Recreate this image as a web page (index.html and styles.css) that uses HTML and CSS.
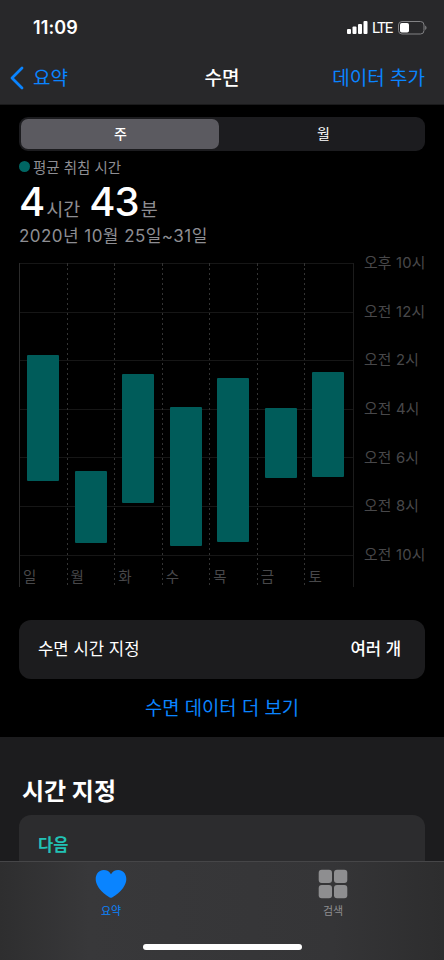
FILE: index.html
```
<!DOCTYPE html>
<html lang="ko">
  <head>
    <meta charset="UTF-8" />
    <meta name="viewport" content="width=device-width, initial-scale=1.0" />
    <title>수면</title>
    <link rel="stylesheet" href="styles.css">
  </head>

  <body>
    <header class="top">
      <div class="status-bar">
        <span class="clock">11:09</span>
        <div class="status-icons">
          <svg width="21" height="13" viewBox="0 0 21 13" fill="#fff">
            <rect x="0" y="8" width="4" height="5" rx="1" />
            <rect x="5.5" y="5.5" width="4" height="7.5" rx="1" />
            <rect x="11" y="3" width="4" height="10" rx="1" />
            <rect x="16.5" y="0" width="4" height="13" rx="1" />
          </svg>
          <span class="network">LTE</span>
          <svg width="29" height="14" viewBox="0 0 29 14">
            <rect x="0.5" y="0.5" width="25.5" height="12.5" rx="3.5" fill="none" stroke="#828284" />
            <rect x="2" y="2" width="9" height="9.5" rx="1.8" fill="#fff" />
            <path d="M27.2 4.5 C29 5.4 29 8.1 27.2 9 Z" fill="#828284" />
          </svg>
        </div>
      </div>
      <nav class="nav-bar">
        <a class="back">
          <svg width="14" height="24" viewBox="0 0 14 24">
            <path d="M12 2 L2 12 L12 22" fill="none" stroke="#0a84ff" stroke-width="2.8" stroke-linecap="round" stroke-linejoin="round" />
          </svg>
          <span>요약</span>
        </a>
        <h1>수면</h1>
        <a class="add">데이터 추가</a>
      </nav>
    </header>

    <main>
      <div class="segment">
        <button class="active">주</button>
        <button>월</button>
      </div>

      <div class="legend"><i class="dot"></i>평균 취침 시간</div>
      <div class="average">
        <b>4</b><span>시간</span><b class="minutes">43</b><span>분</span>
      </div>
      <div class="range">2020년 10월 25일~31일</div>

      <div class="chart">
        <div class="plot">
          <div class="day"><div class="bar" style="margin-top: 91.5px; height: 126.5px"></div><span>일</span></div>
          <div class="day"><div class="bar" style="margin-top: 208px; height: 72px"></div><span>월</span></div>
          <div class="day"><div class="bar" style="margin-top: 111px; height: 129px"></div><span>화</span></div>
          <div class="day"><div class="bar" style="margin-top: 144px; height: 138.5px"></div><span>수</span></div>
          <div class="day"><div class="bar" style="margin-top: 115px; height: 163.5px"></div><span>목</span></div>
          <div class="day"><div class="bar" style="margin-top: 145.4px; height: 69.5px"></div><span>금</span></div>
          <div class="day"><div class="bar" style="margin-top: 109px; height: 105px"></div><span>토</span></div>
        </div>
        <div class="hours">
          <span>오후 10시</span>
          <span>오전 12시</span>
          <span>오전 2시</span>
          <span>오전 4시</span>
          <span>오전 6시</span>
          <span>오전 8시</span>
          <span>오전 10시</span>
        </div>
      </div>

      <div class="row-card">
        <span>수면 시간 지정</span>
        <strong>여러 개</strong>
      </div>
      <a class="more">수면 데이터 더 보기</a>
    </main>

    <section class="schedule">
      <h2>시간 지정</h2>
      <div class="next-card">다음</div>
    </section>

    <footer class="tab-bar">
      <div class="tabs">
        <a class="tab selected">
          <svg width="32" height="30" viewBox="0 0 32 30">
            <path d="M16 28.8 C14.4 28.8 0.7 20.4 0.7 10 C0.7 4.8 4.2 1 8.6 1 C12 1 14.6 2.6 16 5.2 C17.4 2.6 20 1 23.4 1 C27.8 1 31.3 4.8 31.3 10 C31.3 20.4 17.6 28.8 16 28.8 Z" fill="#0a84ff" />
          </svg>
          <span>요약</span>
        </a>
        <a class="tab">
          <svg width="30" height="30" viewBox="0 0 30 30" fill="#8e8e90">
            <rect x="0.7" y="0.8" width="13.3" height="13.3" rx="3" />
            <rect x="16" y="0.8" width="13.3" height="13.3" rx="3" />
            <rect x="0.7" y="16" width="13.3" height="13.3" rx="3" />
            <rect x="16" y="16" width="13.3" height="13.3" rx="3" />
          </svg>
          <span>검색</span>
        </a>
      </div>
      <div class="home-indicator"></div>
    </footer>
  </body>
</html>
```
FILE: styles.css
```
* {
  margin: 0;
  padding: 0;
  box-sizing: border-box;
}

body {
  width: 444px;
  height: 960px;
  display: flex;
  flex-direction: column;
  overflow: hidden;
  background-color: #000;
  color: #fff;
  font-family: "Inter", "Noto Sans CJK KR", sans-serif;
}

.top {
  height: 105px;
  background-color: #28282a;
  border-bottom: 1px solid #1a1a1b;
}

.status-bar {
  height: 55px;
  padding: 0 17px 0 33px;
  display: flex;
  justify-content: space-between;
  align-items: center;
}

.clock {
  font-size: 18px;
  font-weight: 600;
  letter-spacing: 0.1px;
}

.status-icons {
  display: flex;
  align-items: center;
  gap: 4px;
}

.network {
  font-family: "Roboto", sans-serif;
  font-size: 15px;
  letter-spacing: -1.2px;
  margin-right: 2px;
  padding-top: 1px;
}

.nav-bar {
  height: 46px;
  padding: 0 19px 0 10px;
  display: grid;
  grid-template-columns: 1fr auto 1fr;
  align-items: center;
  font-size: 19px;
  line-height: 28px;
}

.nav-bar h1 {
  font-size: 19px;
  font-weight: 500;
  margin-left: 9px;
  padding-top: 2px;
}

.back {
  display: flex;
  align-items: center;
  gap: 9px;
  color: #0a84ff;
}

.back span {
  padding-top: 2px;
}

.add {
  justify-self: end;
  padding-top: 2px;
  color: #0a84ff;
}

main {
  height: 632px;
  padding: 12px 19px 0;
  flex-shrink: 0;
}

.segment {
  height: 34px;
  padding: 2px;
  display: flex;
  border-radius: 9px;
  background-color: #1c1c1f;
}

.segment button {
  flex: 1;
  padding-left: 5px;
  border: none;
  border-radius: 7px;
  background: none;
  color: #fff;
  font-family: inherit;
  font-size: 14px;
  line-height: 30px;
}

.segment .active {
  flex: 0 0 198px;
  padding-left: 1px;
  background-color: #5b5a60;
  font-weight: 500;
}

.legend {
  height: 31px;
  display: flex;
  align-items: center;
  gap: 3px;
  color: #8e8e93;
  font-size: 14.5px;
}

.dot {
  width: 11px;
  height: 11px;
  border-radius: 50%;
  background-color: #006663;
}

.average {
  height: 40px;
  display: flex;
  align-items: baseline;
  line-height: 40px;
}

.average b {
  font-size: 40px;
  font-weight: 500;
  letter-spacing: -1px;
}

.average span {
  color: #8e8e93;
  font-size: 18.5px;
  margin-left: 2px;
}

.average .minutes {
  margin-left: 9px;
}

.range {
  height: 26px;
  color: #8e8e93;
  font-size: 17px;
  line-height: 28px;
  letter-spacing: 0.45px;
}

.chart {
  height: 324px;
  margin-top: 15px;
  display: flex;
}

.plot {
  width: 335px;
  height: 324px;
  flex-shrink: 0;
  display: grid;
  grid-template-columns: repeat(7, 1fr);
  border-left: 1px solid #2b2b2b;
  border-right: 1px solid #1c1c1c;
  /* one line every two hours */
  background: repeating-linear-gradient(#161616 0 1px, transparent 1px 48.6px) top / 100% 293px no-repeat;
}

.day {
  height: 324px;
  padding-left: 7px;
  display: flex;
  flex-direction: column;
  justify-content: space-between;
  background: repeating-linear-gradient(#333 0 2.5px, transparent 2.5px 5px) right / 1px 100% no-repeat;
}

.day:last-child {
  background: none;
}

.day span {
  height: 20px;
  margin: 0 0 0 -4px;
  color: #48484a;
  font-size: 14.5px;
  line-height: 20px;
}

.bar {
  width: 32px;
  border-radius: 1px;
  background-color: #005c5a;
}

.hours {
  height: 312px;
  margin: -10px 0 0 10px;
  display: flex;
  flex-direction: column;
  justify-content: space-between;
  color: #48484a;
  font-size: 14.8px;
  line-height: 20px;
  letter-spacing: 0.2px;
  white-space: nowrap;
}

.row-card {
  height: 59px;
  margin-top: 32.5px;
  padding: 0 24px 2px 19px;
  display: flex;
  justify-content: space-between;
  align-items: center;
  border-radius: 12px;
  background-color: #1c1c1e;
  font-size: 16.7px;
}

.row-card strong {
  font-weight: 500;
}

.more {
  height: 58px;
  display: block;
  color: #0a84ff;
  font-size: 18.8px;
  line-height: 60px;
  text-align: center;
}

.schedule {
  height: 124px;
  padding: 36px 19px 0;
  flex-shrink: 0;
  background-color: #1c1c1e;
}

.schedule h2 {
  height: 42px;
  padding-left: 3px;
  font-size: 24px;
  font-weight: 700;
  line-height: 38px;
}

.next-card {
  height: 46px;
  padding: 16px 19px 0;
  border-radius: 12px 12px 0 0;
  background-color: #2c2c2e;
  color: #22c2b5;
  font-size: 16.5px;
  font-weight: 700;
  line-height: 28px;
}

.tab-bar {
  height: 99px;
  flex-shrink: 0;
  display: flex;
  flex-direction: column;
  align-items: center;
  border-top: 1px solid #464648;
  background: linear-gradient(90deg, #2e2e2f, #38383a 20%, #353537 75%, #2d2d2e);
}

.tabs {
  width: 100%;
  height: 82px;
  padding-top: 7px;
  display: grid;
  grid-template-columns: 1fr 1fr;
}

.tab {
  display: flex;
  flex-direction: column;
  align-items: center;
  gap: 4px;
  color: #8e8e90;
  font-size: 11px;
  line-height: 16px;
}

.selected {
  color: #0a84ff;
}

.home-indicator {
  width: 159px;
  height: 6px;
  border-radius: 3px;
  background-color: #fff;
}
```
